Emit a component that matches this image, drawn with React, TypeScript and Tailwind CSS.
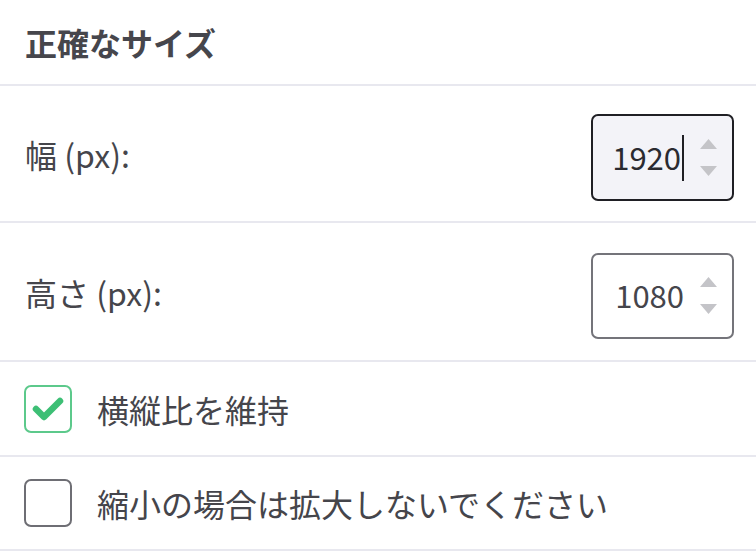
import React from 'react'

const font = { fontFamily: '"Noto Sans CJK JP", "Noto Sans", sans-serif' }

function Spinner() {
  return (
    <div className="flex flex-col items-center gap-[17px]">
      <svg width="17" height="10" viewBox="0 0 17 10">
        <path d="M8.5 0 L17 10 L0 10 Z" fill="#c4c4c8" />
      </svg>
      <svg width="17" height="10" viewBox="0 0 17 10">
        <path d="M0 0 L17 0 L8.5 10 Z" fill="#c4c4c8" />
      </svg>
    </div>
  )
}

function NumberBox({ value, focused }: { value: string; focused?: boolean }) {
  return (
    <div
      className={
        focused
          ? 'mt-[8px] flex h-[87px] w-[143px] items-center justify-end gap-[16px] rounded-[7px] border-2 border-[#1f1f24] bg-[#f3f3f8] pr-[15px]'
          : 'mt-[8px] flex h-[86px] w-[143px] items-center justify-end gap-[16px] rounded-[7px] border-2 border-[#74747a] bg-white pr-[15px]'
      }
    >
      <div className="flex items-center">
        <span className={focused ? 'text-[31px] text-[#2a2a30]' : 'text-[31px] text-[#45454b]'}>{value}</span>
        {focused && <span className="ml-[1px] h-[46px] w-[2px] bg-[#1f1f24]" />}
      </div>
      <Spinner />
    </div>
  )
}

function Checkbox({ checked }: { checked?: boolean }) {
  return checked ? (
    <div className="flex h-[48px] w-[48px] items-center justify-center rounded-[7px] border-2 border-[#5cc98b] bg-white">
      <svg width="32" height="26" viewBox="0 0 32 26">
        <path d="M4 13 L12 21 L28 5" fill="none" stroke="#3dbf75" strokeWidth="6.5" strokeLinecap="round" strokeLinejoin="round" />
      </svg>
    </div>
  ) : (
    <div className="h-[48px] w-[48px] rounded-[7px] border-2 border-[#6e6e74] bg-white" />
  )
}

export default function App() {
  return (
    <div className="w-[756px] h-[554px] bg-white text-[#45454b]" style={font}>
      {/* Header */}
      <div className="flex h-[86px] items-center border-b-2 border-[#e8e8ef] px-[25px]">
        <h2 className="text-[32px] font-bold text-[#46464c]">正確なサイズ</h2>
      </div>

      {/* Width */}
      <div className="flex h-[137px] items-center justify-between border-b-2 border-[#e8e8ef] pl-[25px] pr-[22px]">
        <span className="text-[32px]">幅 (px):</span>
        <NumberBox value="1920" focused />
      </div>

      {/* Height */}
      <div className="flex h-[139px] items-center justify-between border-b-2 border-[#e8e8ef] pl-[25px] pr-[22px]">
        <span className="text-[32px]">高さ (px):</span>
        <NumberBox value="1080" />
      </div>

      {/* Keep aspect ratio */}
      <div className="flex h-[95px] items-center gap-[25px] border-b-2 border-[#e8e8ef] px-[24px]">
        <Checkbox checked />
        <span className="text-[32px]">横縦比を維持</span>
      </div>

      {/* Don't enlarge */}
      <div className="flex h-[94px] items-center gap-[25px] border-b-2 border-[#e8e8ef] px-[24px]">
        <Checkbox />
        <span className="text-[32px]">縮小の場合は拡大しないでください</span>
      </div>
    </div>
  )
}
